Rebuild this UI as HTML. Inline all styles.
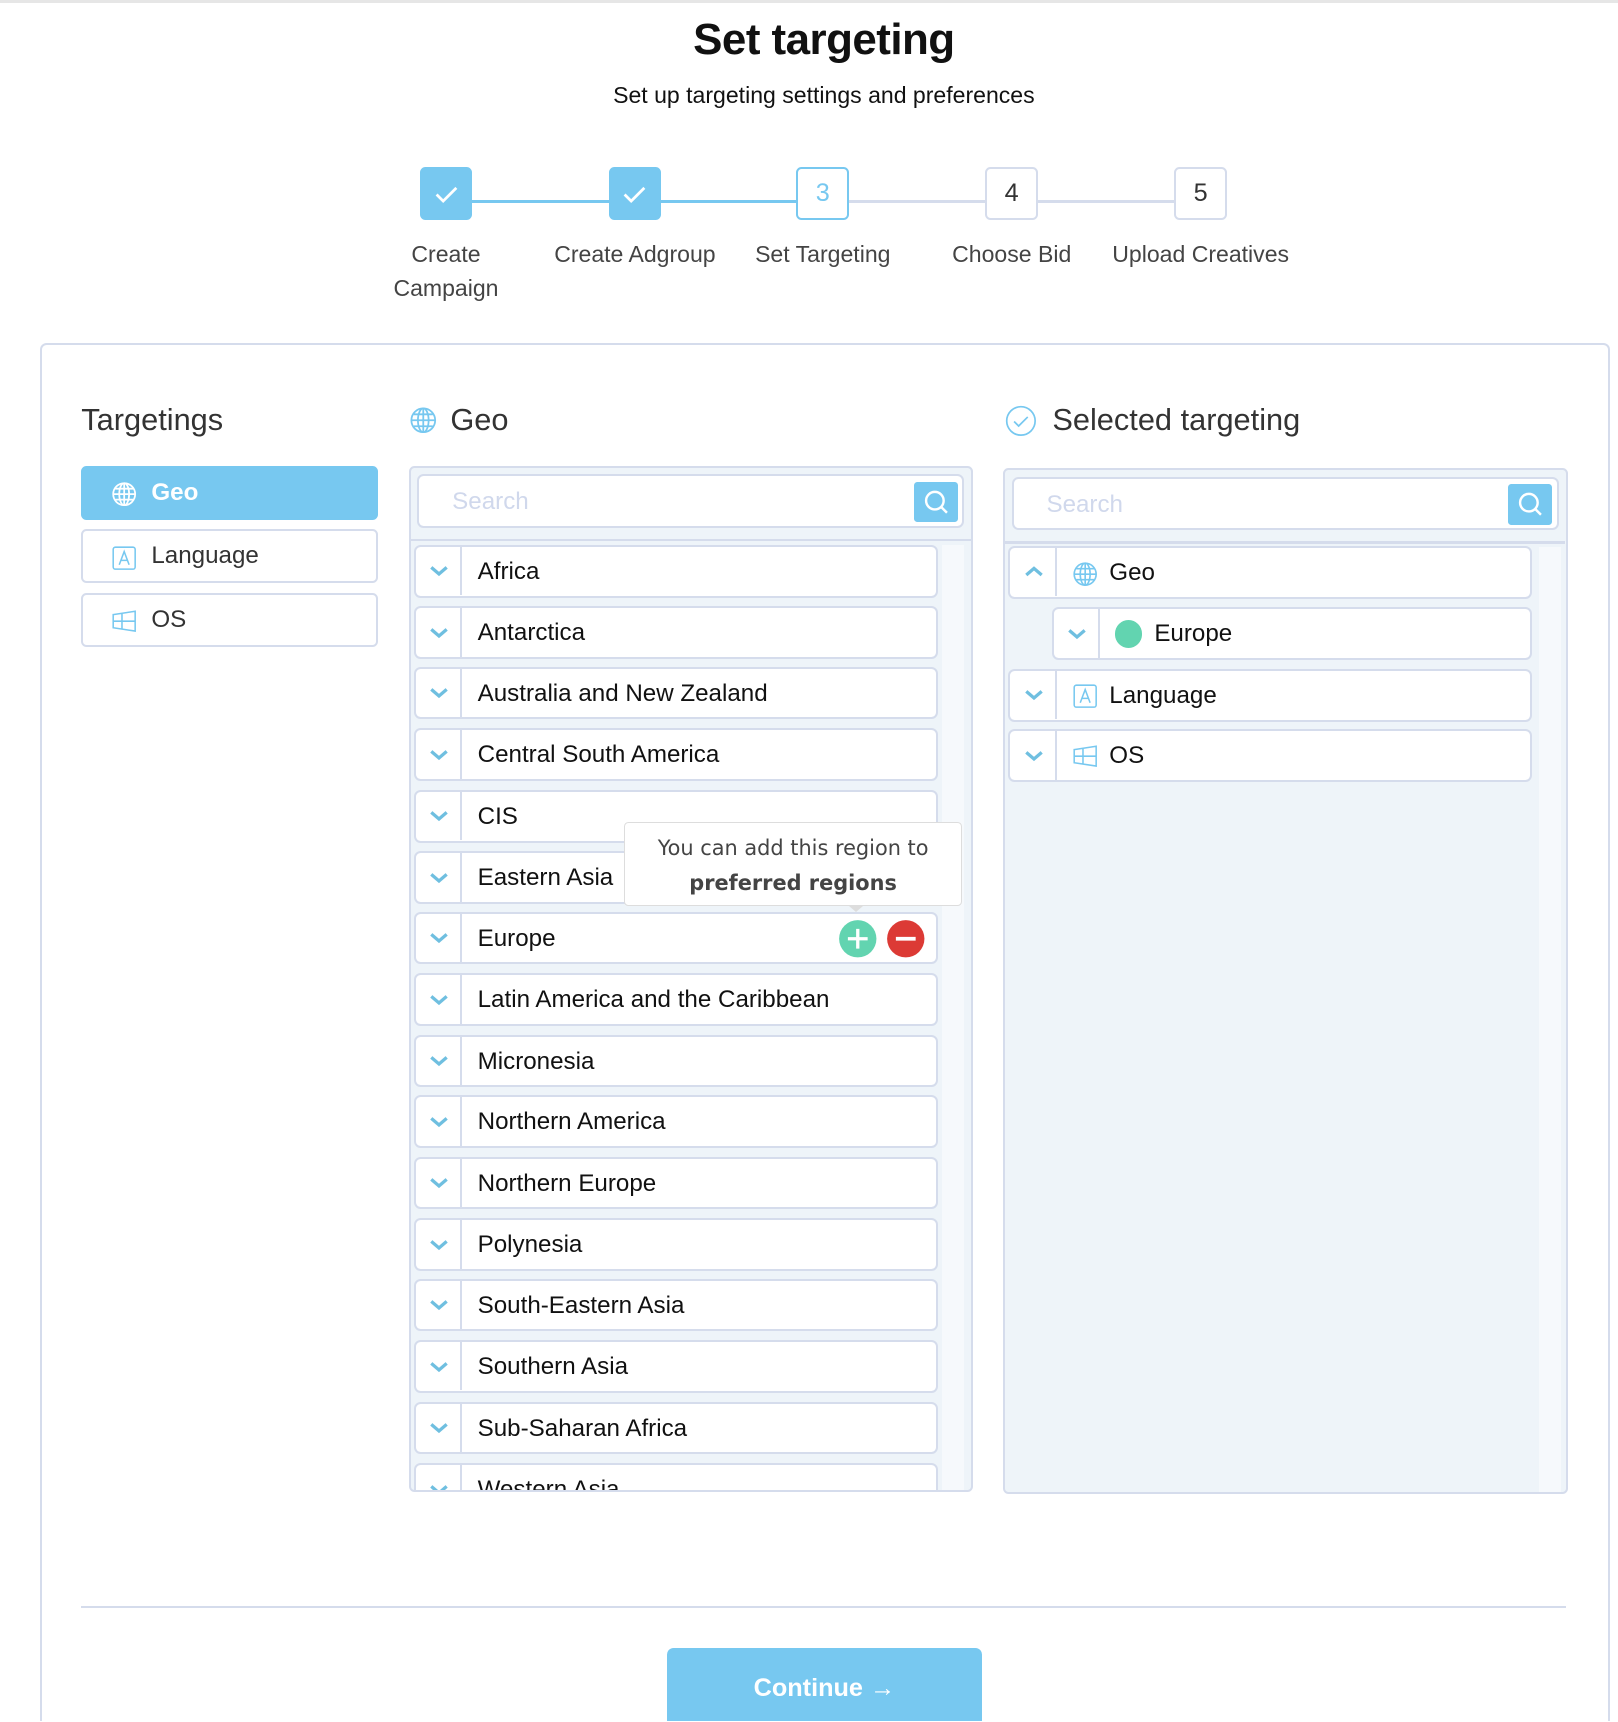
<!DOCTYPE html>
<html><head><meta charset="utf-8"><style>
*{box-sizing:border-box;margin:0;padding:0}
html,body{width:1618px;height:1722px;overflow:hidden;background:#fff}
#w{position:absolute;left:0;top:0;width:1473px;height:1567px;overflow:hidden;zoom:1.0985;font-family:"Liberation Sans",sans-serif;color:#222}
.a{position:absolute}
.topline{left:0;top:0;width:1473px;height:3px;background:#e6e6e6}
h1{position:absolute;left:0;width:1500px;top:14px;text-align:center;font-size:40px;font-weight:bold;color:#111;letter-spacing:-0.5px}
.sub{left:0;width:1500px;top:75px;text-align:center;font-size:21px;color:#111}
.step{width:48px;height:48px;border-radius:5px;top:152px;text-align:center;line-height:44px;font-size:23px;color:#333;border:2px solid #d5dcec;background:#fff}
.done{background:#77c8f0;border-color:#77c8f0}
.cur{border-color:#77c8f0;color:#77c8f0}
.sl{height:3px;top:182px}
.lbl{top:216px;font-size:21px;color:#444;text-align:center;width:200px;line-height:31px}
.card{left:36px;top:312px;width:1430px;height:1300px;border:2px solid #d5dcec;border-radius:6px}
.h2{font-size:28px;color:#333;top:366px}
.tb{left:74px;width:270px;height:49px;border:2px solid #d5dcec;border-radius:5px;font-size:22px;color:#333}
.tb svg{position:absolute;left:25px;top:12px}
.tb span{position:absolute;left:62px;top:10px}
.panel{background:#eef4f9;border:2px solid #d5dcec;border-radius:5px}
.search{background:#fff;border:2px solid #d5dcec;border-radius:6px;height:49px}
.search span{position:absolute;left:30px;top:11px;font-size:22px;color:#d0d8ec}
.sbtn{position:absolute;right:4px;top:5px;width:40px;height:37px;background:#77c8f0;border-radius:3px}
.row{height:48px;background:#fff;border:2px solid #d5dcec;border-radius:6px;font-size:22px;color:#111}
.row .ch{position:absolute;left:0;top:0;width:42px;height:44px;border-right:2px solid #d5dcec}
.row .ch svg{position:absolute;left:11px;top:15px}
.row .t{position:absolute;top:10px}
</style></head><body><div id="w">
<div class="a topline"></div>
<h1>Set targeting</h1>
<div class="a sub">Set up targeting settings and preferences</div>

<div class="a sl" style="left:430px;width:320px;background:#77c8f0"></div>
<div class="a sl" style="left:750px;width:340px;background:#d5dcec"></div>
<div class="a step done" style="left:382px"><svg width="30" height="30" viewBox="0 0 30 30" style="margin-top:8px"><path d="M6 15l6 6L24 9" stroke="#fff" stroke-width="2.5" fill="none"/></svg></div>
<div class="a step done" style="left:554px"><svg width="30" height="30" viewBox="0 0 30 30" style="margin-top:8px"><path d="M6 15l6 6L24 9" stroke="#fff" stroke-width="2.5" fill="none"/></svg></div>
<div class="a step cur" style="left:725px">3</div>
<div class="a step" style="left:897px">4</div>
<div class="a step" style="left:1069px">5</div>
<div class="a lbl" style="left:306px">Create<br>Campaign</div>
<div class="a lbl" style="left:478px">Create Adgroup</div>
<div class="a lbl" style="left:649px">Set Targeting</div>
<div class="a lbl" style="left:821px">Choose Bid</div>
<div class="a lbl" style="left:993px">Upload Creatives</div>

<div class="a card"></div>
<div class="a h2" style="left:74px">Targetings</div>
<div class="a tb" style="top:424px;background:#77c8f0;border-color:#77c8f0;color:#fff;font-weight:bold"><svg width="24" height="24" viewBox="0 0 24 24" fill="none" stroke="#fff" stroke-width="1.6"><circle cx="12" cy="12" r="10"/><ellipse cx="12" cy="12" rx="4.5" ry="10"/><path d="M2 12h20M4 7h16M4 17h16M12 2v20"/></svg><span>Geo</span></div>
<div class="a tb" style="top:482px"><svg width="24" height="24" viewBox="0 0 24 24" fill="none" stroke="#77c8f0" stroke-width="1.4"><rect x="2" y="2" width="20" height="20" rx="2"/><path d="M7.5 18L12 6l4.5 12M9 14h6"/></svg><span>Language</span></div>
<div class="a tb" style="top:540px"><svg width="24" height="24" viewBox="0 0 24 24" fill="none" stroke="#77c8f0" stroke-width="1.4"><path d="M2 6l20-3v18L2 18zM2 12h20M10 5v14.5"/></svg><span>OS</span></div>

<svg class="a" style="left:372px;top:370px" width="26" height="26" viewBox="0 0 24 24" fill="none" stroke="#77c8f0" stroke-width="1.5"><circle cx="12" cy="12" r="10"/><ellipse cx="12" cy="12" rx="4.5" ry="10"/><path d="M2 12h20M4 7h16M4 17h16M12 2v20"/></svg>
<div class="a h2" style="left:410px">Geo</div>
<svg class="a" style="left:915px;top:369px" width="29" height="29" viewBox="0 0 28 28" fill="none" stroke="#77c8f0" stroke-width="1.5"><circle cx="14" cy="14" r="12.5"/><path d="M8 14.5l4 4 8-8"/></svg>
<div class="a h2" style="left:958px">Selected targeting</div>

<div class="a panel" style="left:372px;top:424px;width:514px;height:934px;overflow:hidden">
 <div class="a" style="left:0;top:65px;width:510px;height:2px;background:#d5dcec"></div>
 <div class="a" style="left:484px;top:70px;width:20px;height:870px;background:#f6f9fc"></div>
 <div class="a search" style="left:6px;top:6px;width:498px"><span>Search</span><div class="sbtn"><svg width="40" height="37" viewBox="0 0 40 37" fill="none" stroke="#fff" stroke-width="2.2"><circle cx="19" cy="17" r="8"/><path d="M25 23l5 5"/></svg></div></div>
</div>
<div class="a panel" style="left:913px;top:426px;width:514px;height:934px;overflow:hidden">
 <div class="a" style="left:0;top:65px;width:510px;height:2px;background:#d5dcec"></div>
 <div class="a" style="left:486px;top:70px;width:20px;height:870px;background:#f6f9fc"></div>
 <div class="a search" style="left:6px;top:6px;width:498px"><span>Search</span><div class="sbtn"><svg width="40" height="37" viewBox="0 0 40 37" fill="none" stroke="#fff" stroke-width="2.2"><circle cx="19" cy="17" r="8"/><path d="M25 23l5 5"/></svg></div></div>
</div>

<div class="a" style="left:374px;top:490px;width:490px;height:866px;overflow:hidden">
<div id="rows"></div>
</div>
<script>
var n=["Africa","Antarctica","Australia and New Zealand","Central South America","CIS","Eastern Asia","Europe","Latin America and the Caribbean","Micronesia","Northern America","Northern Europe","Polynesia","South-Eastern Asia","Southern Asia","Sub-Saharan Africa","Western Asia"];
var h="";
for(var i=0;i<n.length;i++){var y=6+Math.round(i*55.7);
h+='<div class="a row" style="left:3px;top:'+y+'px;width:477px"><div class="ch"><svg width="20" height="14" viewBox="0 0 20 14"><path d="M3 4l7 6 7-6" stroke="#6fbfe0" stroke-width="3" fill="none"/></svg></div><div class="t" style="left:56px">'+n[i]+'</div>'+(i==6?'<svg class="a" style="left:384px;top:5px" width="36" height="36" viewBox="0 0 36 36"><circle cx="18" cy="18" r="17" fill="#62d4b0"/><path d="M18 9v18M9 18h18" stroke="#fff" stroke-width="3"/></svg><svg class="a" style="left:428px;top:5px" width="36" height="36" viewBox="0 0 36 36"><circle cx="18" cy="18" r="17" fill="#dc3a35"/><path d="M9 18h18" stroke="#fff" stroke-width="3.5"/></svg>':'')+'</div>';}
document.getElementById("rows").innerHTML=h;
</script>

<div class="a" style="left:568px;top:748px;width:308px;height:77px;background:#fff;border:1.5px solid #ddd;border-radius:4px;text-align:center;color:#444;line-height:31px;padding-top:8px;font-family:'DejaVu Sans',sans-serif;font-size:19px">You can add this region to<br><b>preferred regions</b></div>
<div class="a" style="left:773px;top:825px;width:0;height:0;border-left:7px solid transparent;border-right:7px solid transparent;border-top:6px solid #ddd"></div>

<div class="a row" style="left:918px;top:497px;width:477px"><div class="ch"><svg width="20" height="14" viewBox="0 0 20 14"><path d="M3 10l7-6 7 6" stroke="#6fbfe0" stroke-width="3" fill="none"/></svg></div><svg class="a" style="left:56px;top:12px" width="24" height="24" viewBox="0 0 24 24" fill="none" stroke="#77c8f0" stroke-width="1.5"><circle cx="12" cy="12" r="10"/><ellipse cx="12" cy="12" rx="4.5" ry="10"/><path d="M2 12h20M4 7h16M4 17h16M12 2v20"/></svg><div class="t" style="left:90px">Geo</div></div>
<div class="a row" style="left:958px;top:553px;width:437px"><div class="ch"><svg width="20" height="14" viewBox="0 0 20 14"><path d="M3 4l7 6 7-6" stroke="#6fbfe0" stroke-width="3" fill="none"/></svg></div><div class="a" style="left:55px;top:10px;width:25px;height:25px;border-radius:50%;background:#62d4b0"></div><div class="t" style="left:91px">Europe</div></div>
<div class="a row" style="left:918px;top:609px;width:477px"><div class="ch"><svg width="20" height="14" viewBox="0 0 20 14"><path d="M3 4l7 6 7-6" stroke="#6fbfe0" stroke-width="3" fill="none"/></svg></div><svg class="a" style="left:56px;top:11px" width="24" height="24" viewBox="0 0 24 24" fill="none" stroke="#77c8f0" stroke-width="1.4"><rect x="2" y="2" width="20" height="20" rx="2"/><path d="M7.5 18L12 6l4.5 12M9 14h6"/></svg><div class="t" style="left:90px">Language</div></div>
<div class="a row" style="left:918px;top:664px;width:477px"><div class="ch"><svg width="20" height="14" viewBox="0 0 20 14"><path d="M3 4l7 6 7-6" stroke="#6fbfe0" stroke-width="3" fill="none"/></svg></div><svg class="a" style="left:56px;top:11px" width="24" height="24" viewBox="0 0 24 24" fill="none" stroke="#77c8f0" stroke-width="1.4"><path d="M2 6l20-3v18L2 18zM2 12h20M10 5v14.5"/></svg><div class="t" style="left:90px">OS</div></div>

<div class="a" style="left:74px;top:1462px;width:1352px;height:2px;background:#d5dcec"></div>
<div class="a" style="left:607px;top:1500px;width:287px;height:120px;background:#77c8f0;border-radius:6px;color:#fff;font-size:23px;font-weight:bold;text-align:center;padding-top:24px">Continue →</div>
</div></body></html>
